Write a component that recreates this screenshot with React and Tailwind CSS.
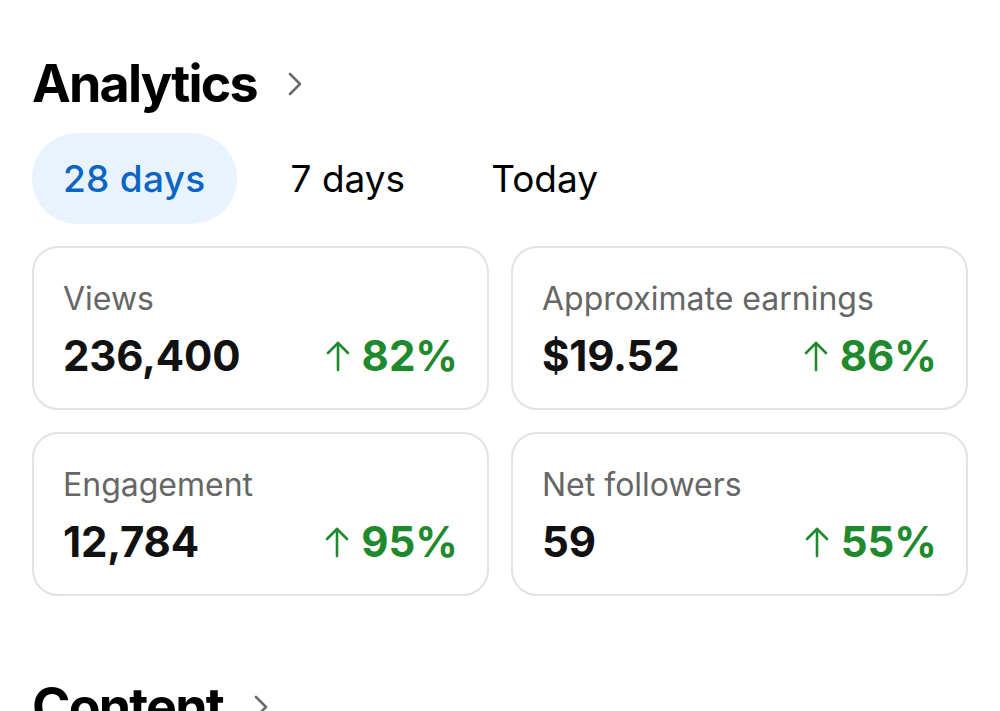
import React from "react";

const stats = [
  { label: "Views", value: "236,400", change: "82%" },
  { label: "Approximate earnings", value: "$19.52", change: "86%" },
  { label: "Engagement", value: "12,784", change: "95%" },
  { label: "Net followers", value: "59", change: "55%" },
];

function Chevron({ className }) {
  return (
    <svg viewBox="0 0 16 26" className={className} fill="none" stroke="#6b6b6b" strokeWidth="2.6" strokeLinecap="round" strokeLinejoin="round">
      <path d="M3 3 L13 13 L3 23" />
    </svg>
  );
}

function UpArrow() {
  return (
    <svg viewBox="0 0 24 32" className="w-[24px] h-[32px]" fill="none" stroke="#1f8a2d" strokeWidth="2.6" strokeLinecap="round" strokeLinejoin="round">
      <path d="M12 30 V3" />
      <path d="M2 13 L12 3 L22 13" />
    </svg>
  );
}

function StatCard({ label, value, change }) {
  return (
    <div className="h-[164px] rounded-[26px] border-2 border-[#e2e2e2] px-[29px] pt-[35px]">
      <div className="text-[32px] leading-none text-[#666666]">{label}</div>
      <div className="mt-[20px] flex items-center justify-between">
        <span className="text-[42px] leading-none font-bold tracking-[-0.2px] text-[#111111]">{value}</span>
        <span className="flex items-center gap-[12px]">
          <UpArrow />
          <span className="text-[42px] leading-none font-bold text-[#1f8a2d]">{change}</span>
        </span>
      </div>
    </div>
  );
}

export default function App() {
  return (
    <div
      className="min-h-[711px] h-[711px] overflow-hidden bg-white px-8 pt-[58px]"
      style={{ fontFamily: "Inter, 'Liberation Sans', sans-serif" }}
    >
      <h2 className="flex items-center gap-[30px] text-[52px] leading-none font-bold tracking-[-1.8px] text-black">
        <span>Analytics</span>
        <Chevron className="w-[16px] h-[26px]" />
      </h2>

      <div className="mt-[23px] flex items-center gap-[22px] text-[37px] leading-none">
        <button className="h-[91px] rounded-full bg-[#e9f3fe] px-[31px] font-medium tracking-[0.3px] text-[#0a66c2]">28 days</button>
        <button className="h-[91px] rounded-full px-8 text-black">7 days</button>
        <button className="h-[91px] rounded-full px-8 text-black">Today</button>
      </div>

      <div className="mt-[22px] grid grid-cols-2 gap-[22px]">
        {stats.map((s) => (
          <StatCard key={s.label} {...s} />
        ))}
      </div>

      <h2 className="mt-[85px] flex items-center gap-[30px] text-[52px] leading-none font-bold tracking-[-1.8px] text-black">
        <span>Content</span>
        <Chevron className="w-[16px] h-[26px]" />
      </h2>
    </div>
  );
}
